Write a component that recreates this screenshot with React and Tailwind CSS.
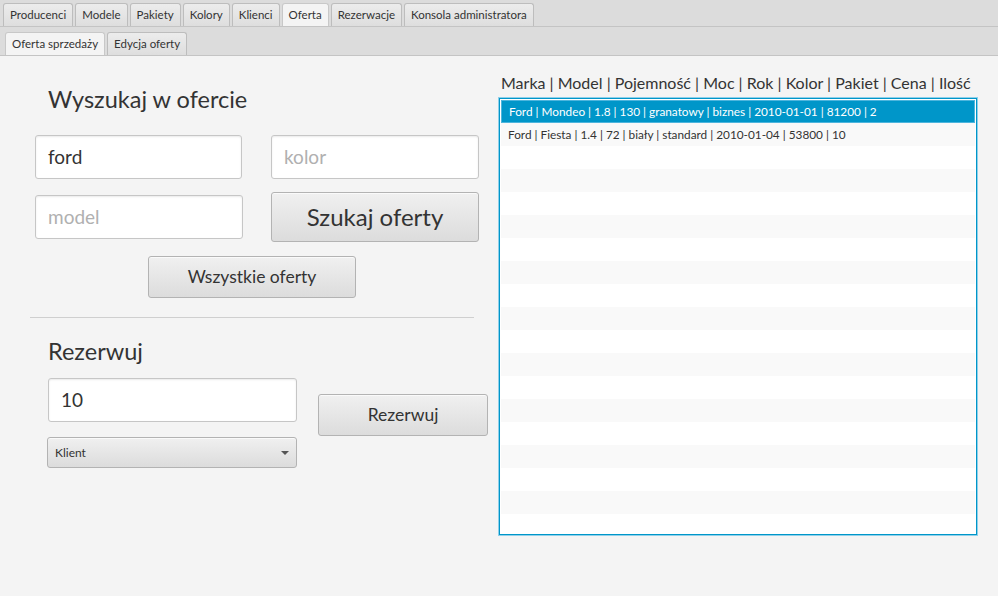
import React from 'react';

const font = { fontFamily: 'Lato, "Open Sans", sans-serif' };

const outerTabs = ['Producenci', 'Modele', 'Pakiety', 'Kolory', 'Klienci', 'Oferta', 'Rezerwacje', 'Konsola administratora'];
const innerTabs = ['Oferta sprzedaży', 'Edycja oferty'];

const rows = [
  'Ford | Mondeo | 1.8 | 130 | granatowy | biznes | 2010-01-01 | 81200 | 2',
  'Ford | Fiesta | 1.4 | 72 | biały | standard | 2010-01-04 | 53800 | 10',
];

const Tab = ({ label, selected }) => (
  <div
    className={
      'h-[23px] px-[6px] flex items-center text-[11.5px] text-[#333] border border-b-0 rounded-t-[3px] ' +
      (selected
        ? 'bg-[#f4f4f4] border-[#c8c8c8]'
        : 'bg-gradient-to-b from-[#ececec] to-[#dedede] border-[#bdbdbd]')
    }
  >
    {label}
  </div>
);

const Button = ({ children, className }) => (
  <div
    className={
      'flex items-center justify-center text-[#333] border border-[#b3b3b3] rounded-[3px] bg-gradient-to-b from-[#f0f0f0] to-[#dcdcdc] shadow-[inset_0_1px_0_#fafafa] ' +
      className
    }
  >
    {children}
  </div>
);

const Field = ({ value, placeholder, className }) => (
  <div
    className={
      'flex items-center px-[12px] text-[19px] bg-white border border-[#c6c6c6] rounded-[3px] shadow-[inset_0_1px_2px_#eaeaea] ' +
      className
    }
  >
    {value ? <span className="text-[#333]">{value}</span> : <span className="text-[#b0b0b0]">{placeholder}</span>}
  </div>
);

export default function App() {
  const listRows = Array.from({ length: 19 }, (_, i) => i);
  return (
    <div className="w-[998px] h-[596px] bg-[#f4f4f4] flex flex-col overflow-hidden" style={font}>
      <div className="h-[27px] bg-[#dcdcdc] border-b border-[#c4c4c4] flex items-end gap-[2px] pl-[3px]">
        {outerTabs.map((t) => (
          <Tab key={t} label={t} selected={t === 'Oferta'} />
        ))}
      </div>
      <div className="h-[29px] bg-[#dcdcdc] border-b border-[#c4c4c4] flex items-end gap-[2px] pl-[5px]">
        {innerTabs.map((t) => (
          <Tab key={t} label={t} selected={t === 'Oferta sprzedaży'} />
        ))}
      </div>
      <div className="flex flex-1">
        <div className="w-[499px] flex flex-col">
          <div className="ml-[48px] mt-[29px] text-[23.5px] leading-[28px] text-[#333]">Wyszukaj w ofercie</div>
          <div className="flex mt-[22px] ml-[35px] gap-[29px]">
            <Field value="ford" className="w-[207px] h-[44px]" />
            <Field placeholder="kolor" className="w-[208px] h-[44px]" />
          </div>
          <div className="flex mt-[13px] ml-[35px] gap-[28px] items-start">
            <Field placeholder="model" className="w-[208px] h-[44px] mt-[3px]" />
            <Button className="w-[208px] h-[50px] text-[24px]">Szukaj oferty</Button>
          </div>
          <Button className="ml-[148px] mt-[14px] w-[208px] h-[42px] text-[17.5px]">Wszystkie oferty</Button>
          <div className="ml-[30px] mt-[19px] w-[444px] h-[1px] bg-[#cfcfcf]" />
          <div className="ml-[48px] mt-[19px] text-[23.5px] leading-[28px] text-[#333]">Rezerwuj</div>
          <div className="flex ml-[48px] mt-[13px] gap-[21px]">
            <div className="flex flex-col">
              <Field value="10" className="w-[249px] h-[44px]" />
              <Button className="-ml-[1px] mt-[15px] w-[250px] h-[31px] text-[12px] !justify-between pl-[7px] pr-[7px]">
                <span>Klient</span>
                <svg width="8" height="4" viewBox="0 0 8 4"><path d="M0 0h8L4 4z" fill="#555" /></svg>
              </Button>
            </div>
            <Button className="mt-[16px] w-[170px] h-[42px] text-[17.5px]">Rezerwuj</Button>
          </div>
        </div>
        <div className="flex flex-col">
          <div className="mt-[16px] ml-[2px] text-[16px] leading-[22px] text-[#333] whitespace-nowrap">
            Marka | Model | Pojemność | Moc | Rok | Kolor | Pakiet | Cena | Ilość
          </div>
          <div className="mt-[4px] w-[478px] h-[437px] border border-[#0096c9] shadow-[0_0_0_1px_#8fd0ea] p-[1px] bg-white overflow-hidden">
            {listRows.map((i) => {
              const selected = i === 0;
              return (
                <div
                  key={i}
                  className={
                    'h-[23px] flex items-center px-[7px] text-[11.8px] whitespace-nowrap ' +
                    (selected
                      ? 'bg-[#0096c9] text-white border border-[#4db5dd]'
                      : i % 2 === 1
                      ? 'bg-[#f9f9f9] text-[#333]'
                      : 'bg-white text-[#333]')
                  }
                >
                  {rows[i] || ''}
                </div>
              );
            })}
          </div>
        </div>
      </div>
    </div>
  );
}
